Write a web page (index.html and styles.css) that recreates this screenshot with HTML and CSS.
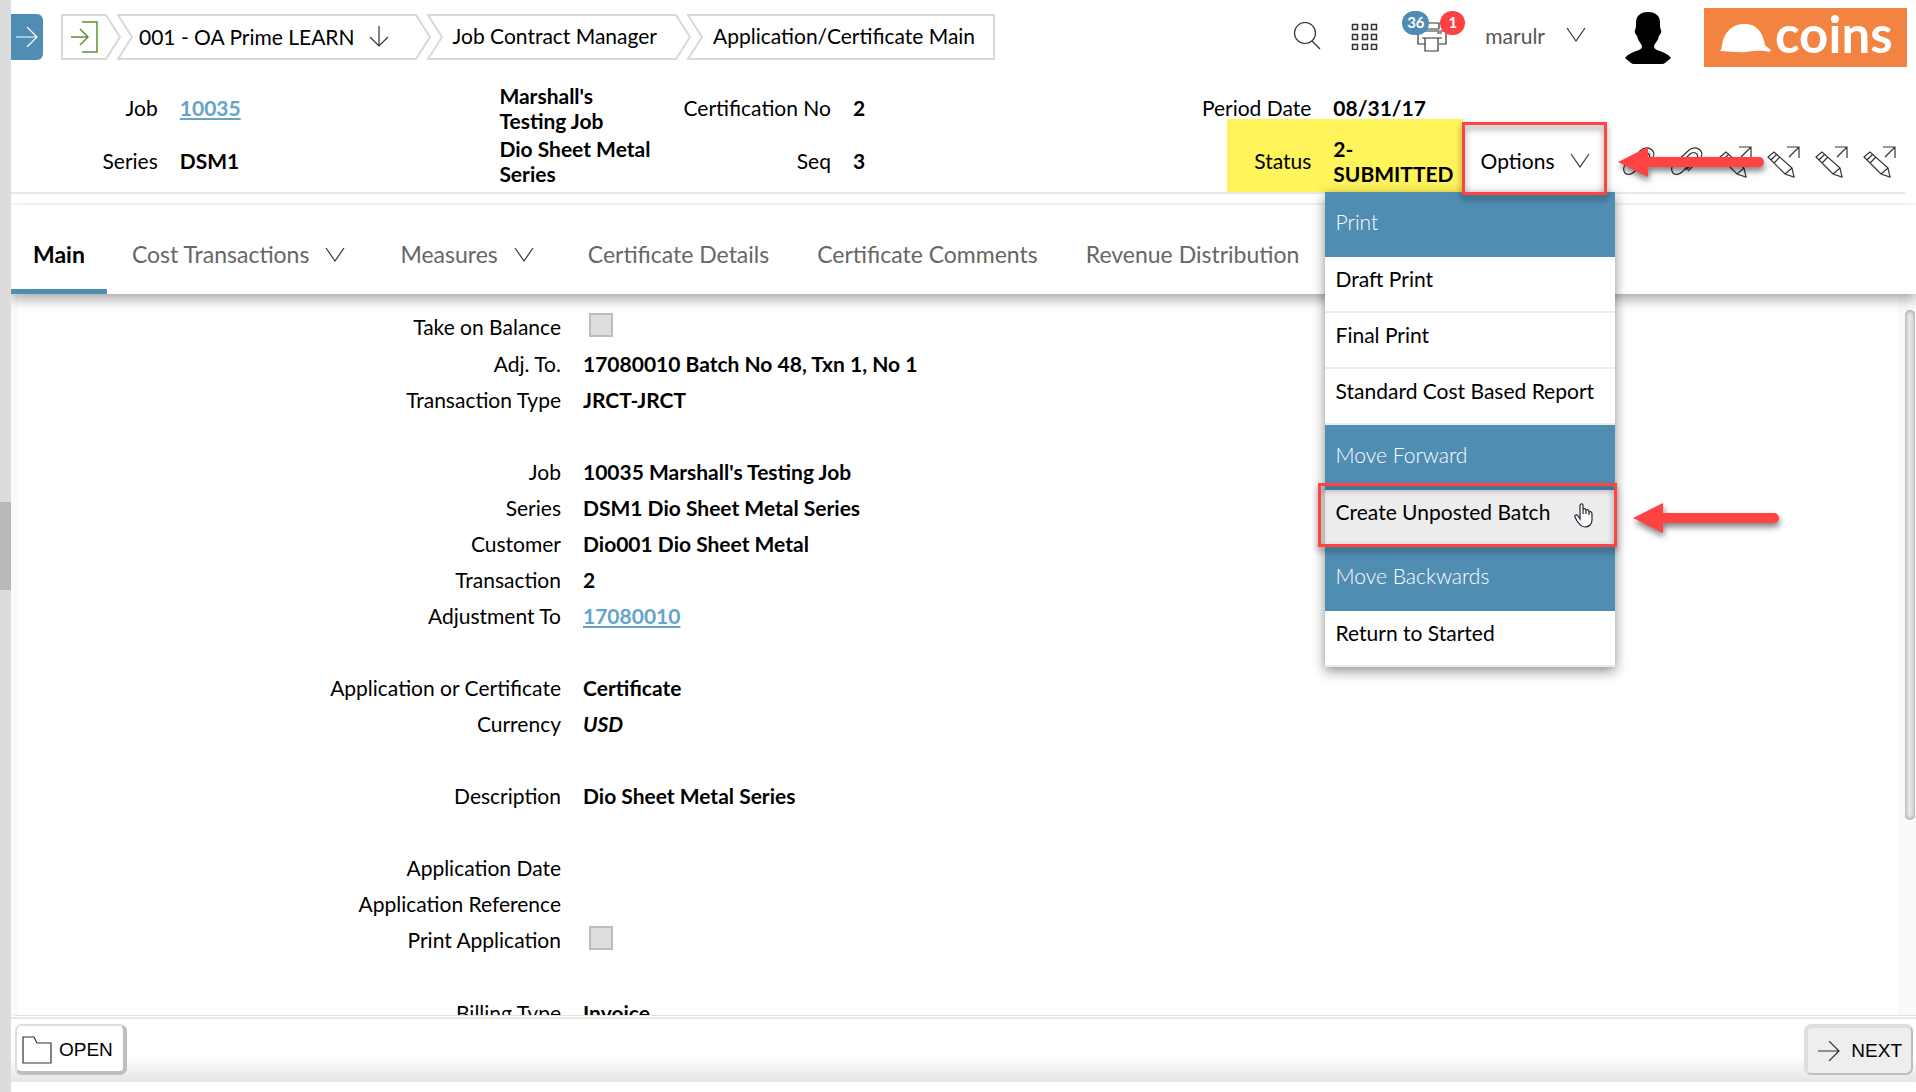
FILE: index.html
```html
<!DOCTYPE html>
<html lang="en">
<head>
<meta charset="utf-8">
<title>Application/Certificate Main</title>
<link rel="stylesheet" href="styles.css">
</head>
<body>
<svg class="defs" aria-hidden="true">
  <symbol id="notch" viewBox="0 0 16 46"><path d="M16 1H1L15 23L1 45H16"/></symbol>
  <symbol id="point" viewBox="0 0 16 46"><path d="M0 1H1L15 23L1 45H0"/></symbol>
  <symbol id="chevron" viewBox="0 0 20 16"><path d="M1 1L10 14L19 1"/></symbol>
  <symbol id="clip" viewBox="0 0 34 34"><path d="M20 18L11 27C8 30 4 30 2 28C0 25 0 22 3 19L17 6C21 2 26 2 29 5C32 8 31 12 28 15L17 26M8 20L19 9C21 7 24 7 26 9C27 11 27 13 25 15L15 25"/></symbol>
  <symbol id="pencil" viewBox="0 0 34 34"><path d="M1 12L7 7L25 23L27 32L18 29ZM4 15L10 9M7 18L13 12M18 29L25 23M20 2H32V13M32 2L22 12"/></symbol>
  <symbol id="pointer-arrow" viewBox="0 0 146 34"><path d="M0 17L30 2V12H141A5 5 0 0 1 141 22H30V32Z"/></symbol>
</svg>
<div class="app">
  <div class="splitter"><span class="splitter-handle"></span></div>
  <div class="page">
    <header class="topbar">
      <button class="expand" aria-label="Expand menu"><svg width="22" height="20" viewBox="0 0 22 20"><path d="M0 10H21M11 0L21 10L11 20"/></svg></button>
      <nav class="crumbs" aria-label="Breadcrumb">
        <a class="crumb first" href="#" aria-label="Exit"><span class="crumb-body exit"><svg width="28" height="32" viewBox="0 0 28 32"><path d="M11 1H26V31H11M0 16H17M9 8L17 16L9 24"/></svg></span><svg class="edge"><use href="#point"/></svg></a>
        <a class="crumb" href="#"><svg class="edge"><use href="#notch"/></svg><span class="crumb-body company">001 - OA Prime LEARN<svg width="20" height="21" viewBox="0 0 20 21"><path d="M10 0V20M1 11L10 20L19 11"/></svg></span><svg class="edge"><use href="#point"/></svg></a>
        <a class="crumb" href="#"><svg class="edge"><use href="#notch"/></svg><span class="crumb-body">Job Contract Manager</span><svg class="edge"><use href="#point"/></svg></a>
        <a class="crumb last" href="#"><svg class="edge"><use href="#notch"/></svg><span class="crumb-body">Application/Certificate Main</span></a>
      </nav>
      <div class="tools">
        <button class="tool" aria-label="Search"><svg width="28" height="28" viewBox="0 0 28 28"><circle cx="12" cy="11" r="10.5"/><path d="M19 19L27 27"/></svg></button>
        <button class="tool" aria-label="Applications"><svg class="apps" width="28" height="28" viewBox="0 0 28 28"><path d="M1.500 2.500h5v5h-5zM11.500 2.500h5v5h-5zM20.500 2.500h5v5h-5zM1.500 12.500h5v5h-5zM11.500 12.500h5v5h-5zM20.500 12.500h5v5h-5zM1.500 22.500h5v5h-5zM11.500 22.500h5v5h-5zM20.500 22.500h5v5h-5z"/></svg></button>
        <button class="tool printer" aria-label="Print queue"><svg width="30" height="30" viewBox="0 0 30 30"><path d="M8 7V1H22V7M8 22H1V11Q1 9 3 9H27Q29 9 29 11V22H22M20 11H25M5 16H25M8 16V29H21V16M8 7H22"/></svg><span class="badge blue">36</span><span class="badge red">1</span></button>
        <button class="user">marulr<svg class="chev"><use href="#chevron"/></svg></button>
        <svg class="avatar" width="46" height="52" viewBox="0 0 46 52"><path d="M23 0C31 0 35 4 35 11C35 14 35 16 36 18C37 21 35 22 34 24C33 29 30 31 29 34C29 36 30 37 32 38C38 40 43 42 46 46L40 51Q39 52 37 52H9Q7 52 6 51L0 46C3 42 8 40 14 38C16 37 17 36 17 34C16 31 13 29 12 24C11 22 9 21 10 18C11 16 11 14 11 11C11 4 15 0 23 0Z"/></svg>
        <div class="logo"><svg width="51" height="30" viewBox="0 0 51 30"><path d="M0 28Q2 26 2 22C4 9 12 1 24 1C36 0 43 9 45 22Q48 25 51 27L49 29C40 27 33 28 26 29C17 30 9 28 0 28Z"/></svg><span>coins</span></div>
      </div>
    </header>

    <section class="context">
      <span class="label">Job</span><a class="value" href="#">10035</a><span class="value">Marshall's Testing Job</span>
      <span class="label">Certification No</span><span class="value">2</span>
      <span class="label">Period Date</span><span class="value">08/31/17</span><span></span>
      <span class="label">Series</span><span class="value">DSM1</span><span class="value">Dio Sheet Metal Series</span>
      <span class="label">Seq</span><span class="value">3</span>
      <span class="label">Status</span><span class="value status">2-<br>SUBMITTED</span>
      <div class="actions">
        <div class="options">
          <button class="options-button">Options<svg class="chev"><use href="#chevron"/></svg></button>
          <div class="menu">
            <h2>Print</h2>
            <a href="#">Draft Print</a>
            <a href="#">Final Print</a>
            <a href="#">Standard Cost Based Report</a>
            <h2>Move Forward</h2>
            <a class="hover" href="#">Create Unposted Batch
              <svg class="hand" width="20" height="26" viewBox="0 0 20 26"><path d="M6 14V3C6 0 9 0 9 3V11V7C9 5 12 5 12 8V11V8C12 6 15 6 15 9V12V10C15 8 18 8 18 11V17C18 21 15 24 11 24C7 24 5 21 3 18L1 14C0 12 3 11 4 13L6 16Z"/></svg>
              <svg class="arrow arrow-item"><use href="#pointer-arrow"/></svg>
            </a>
            <h2>Move Backwards</h2>
            <a href="#">Return to Started</a>
          </div>
        </div>
        <div class="links">
          <button aria-label="Attachments"><svg><use href="#clip"/></svg></button>
          <button aria-label="Add attachment"><svg><use href="#clip"/></svg></button>
          <button aria-label="Note 1"><svg><use href="#pencil"/></svg></button>
          <button aria-label="Note 2"><svg><use href="#pencil"/></svg></button>
          <button aria-label="Note 3"><svg><use href="#pencil"/></svg></button>
          <button aria-label="Note 4"><svg><use href="#pencil"/></svg></button>
          <svg class="arrow arrow-options"><use href="#pointer-arrow"/></svg>
        </div>
      </div>
    </section>

    <nav class="tabs">
      <a class="tab active" href="#">Main</a>
      <a class="tab more" href="#">Cost Transactions<svg class="chev"><use href="#chevron"/></svg></a>
      <a class="tab more" href="#">Measures<svg class="chev"><use href="#chevron"/></svg></a>
      <a class="tab" href="#">Certificate Details</a>
      <a class="tab" href="#">Certificate Comments</a>
      <a class="tab" href="#">Revenue Distribution</a>
    </nav>

    <main class="content">
      <div class="form">
        <div class="group">
          <label class="label" for="balance">Take on Balance</label><input type="checkbox" id="balance" disabled>
          <span class="label">Adj. To.</span><span class="value">17080010 Batch No 48, Txn 1, No 1</span>
          <span class="label">Transaction Type</span><span class="value">JRCT-JRCT</span>
        </div>
        <div class="group">
          <span class="label">Job</span><span class="value">10035 Marshall's Testing Job</span>
          <span class="label">Series</span><span class="value">DSM1 Dio Sheet Metal Series</span>
          <span class="label">Customer</span><span class="value">Dio001 Dio Sheet Metal</span>
          <span class="label">Transaction</span><span class="value">2</span>
          <span class="label">Adjustment To</span><a class="value" href="#">17080010</a>
        </div>
        <div class="group">
          <span class="label">Application or Certificate</span><span class="value">Certificate</span>
          <span class="label">Currency</span><em class="value">USD</em>
        </div>
        <div class="group">
          <span class="label">Description</span><span class="value">Dio Sheet Metal Series</span>
        </div>
        <div class="group">
          <span class="label">Application Date</span><span class="value"></span>
          <span class="label">Application Reference</span><span class="value"></span>
          <label class="label" for="print-app">Print Application</label><input type="checkbox" id="print-app" disabled>
        </div>
        <div class="group">
          <span class="label">Billing Type</span><span class="value">Invoice</span>
        </div>
      </div>
      <div class="track"><span class="thumb"></span></div>
    </main>

    <footer class="footer">
      <button class="open"><svg width="30" height="28" viewBox="0 0 30 28"><path d="M1 27V1H12L15 7H29V27Z"/></svg>OPEN</button>
      <button class="next"><svg width="22" height="20" viewBox="0 0 22 20"><path d="M0 10H21M11 0L21 10L11 20"/></svg>NEXT</button>
    </footer>
  </div>
</div>
</body>
</html>
```
FILE: styles.css
```css
* { box-sizing: border-box; }
html, body { height: 100%; }
body {
  margin: 0;
  background: #fff;
  color: #000;
  font: 400 21px/25px Lato, "Open Sans", sans-serif;
  overflow: hidden;
}
button { border: 0; padding: 0; background: none; font: inherit; color: inherit; }
a { color: inherit; text-decoration: none; }
svg { fill: none; stroke: #333; stroke-width: 1.2; flex: none; }
.defs { position: absolute; width: 0; height: 0; }

.app { display: flex; height: 100vh; }
.splitter {
  width: 11px;
  flex: none;
  display: flex;
  align-items: center;
  background: #dcdcdc;
}
.splitter-handle { width: 11px; height: 88px; background: #b9b9b9; }
.page { flex: 1; min-width: 0; display: flex; flex-direction: column; padding-bottom: 10px; }

/* top bar */
.topbar { display: flex; height: 81px; flex: none; padding-right: 9px; }
.expand {
  display: flex;
  align-items: center;
  justify-content: center;
  width: 32px;
  height: 46px;
  margin: 14px 18px 0 0;
  border-radius: 0 6px 6px 0;
  background: #4f8db3;
}
.expand svg { stroke: #fff; }
.crumbs { display: flex; margin-top: 14px; }
.crumb { display: flex; height: 46px; margin-right: -4px; white-space: nowrap; }
.crumb .edge { width: 16px; height: 46px; stroke: #d8d8d8; stroke-width: 2; }
.crumb-body {
  display: flex;
  align-items: center;
  padding: 0 18px 3px 10px;
  border: solid #d8d8d8;
  border-width: 2px 0;
}
.company { gap: 14px; padding: 0 26px 1px 6px; }
.exit { padding: 0 6px 0 8px; border-left-width: 2px; }
.exit svg { stroke: #5c9132; stroke-width: 1.5; }
.last .crumb-body { border-right-width: 2px; }
.tools { display: flex; margin-left: auto; }
.tool { display: flex; height: 28px; margin: 22px 30px 0 0; position: relative; }
.printer { margin: 22px 38px 0 8px; }
.apps { stroke-width: 1.5; }
.badge {
  position: absolute;
  top: -11px;
  height: 24px;
  border-radius: 12px;
  font: 700 15px/22px Lato, sans-serif;
  color: #fff;
  text-align: center;
}
.blue { left: -15px; width: 27px; background: #4f8db3; }
.red { left: 23px; width: 25px; background: #ff4040; }
.user { display: flex; align-items: center; gap: 21px; height: 28px; margin-top: 21px; color: #555; }
.chev { width: 20px; height: 16px; }
.avatar { margin: 12px 33px 0 39px; fill: #000; stroke: none; }
.logo {
  display: flex;
  align-items: center;
  gap: 4px;
  width: 203px;
  height: 59px;
  margin-top: 8px;
  padding-left: 16px;
  background: #f28340;
  color: #fff;
  font: 700 51px/50px Lato, sans-serif;
}
.logo svg { fill: #fff; stroke: none; }
.logo span { padding-bottom: 8px; }

/* record summary */
.context {
  display: grid;
  grid-template-columns: 147fr 298fr 160fr 150fr 158fr 279fr 120fr 430fr;
  column-gap: 22px;
  grid-auto-rows: 53px;
  align-items: center;
  margin: 0 11px 0 0;
  padding-bottom: 5px;
  border-bottom: 2px solid #e8e8e8;
  position: relative;
  z-index: 2;
}
.label { text-align: right; white-space: nowrap; }
.value { font-weight: 700; }
a.value { color: #67a2c9; text-decoration: underline; justify-self: start; }
.status { position: relative; }
.status::before {
  content: "";
  position: absolute;
  z-index: -1;
  inset: -17px -9px -6px -106px;
  background: #fff45a;
}
.actions { display: flex; justify-content: space-between; align-items: center; }
.options { position: relative; }
.options-button { display: flex; align-items: center; gap: 16px; height: 53px; padding: 0 5px; }
.options::after, .hover::before {
  content: "";
  position: absolute;
  border: 3px solid #ff4343;
  filter: drop-shadow(0 4px 3px rgba(0, 0, 0, .45));
  pointer-events: none;
}
.options::after { inset: -12px -12px -8px -14px; z-index: 2; }
.menu {
  position: absolute;
  top: 58px;
  left: -151px;
  width: 290px;
  background: #fff;
  box-shadow: 0 4px 12px rgba(0, 0, 0, .45);
}
.menu h2 {
  height: 65px;
  margin: 0;
  padding: 17px 11px;
  background: #4f8db3;
  color: #fff;
  font: 300 21px/26px Lato, sans-serif;
}
.menu a { display: block; height: 56px; padding: 9px 11px; line-height: 26px; border-bottom: 2px solid #ececec; white-space: nowrap; position: relative; }
.menu .hover { background: #ededed; z-index: 1; }
.hover::before { inset: -7px -2px -3px -7px; }
.hand { position: absolute; right: 21px; top: 13px; fill: #fff; stroke: #223; }
.arrow {
  position: absolute;
  width: 146px;
  height: 34px;
  fill: #ff4343;
  stroke: none;
  filter: drop-shadow(1px 4px 3px rgba(0, 0, 0, .5));
}
.arrow-item { left: 308px; top: 11px; }
.arrow-options { left: -5px; top: 0; }
.links { display: flex; gap: 14px; margin: 2px 8px 0 0; position: relative; }
.links button, .links button svg { display: block; width: 34px; height: 34px; }

/* tabs */
.tabs {
  display: flex;
  height: 89px;
  flex: none;
  margin-top: 11px;
  background: #fff;
  color: #666;
  font-size: 23px;
  box-shadow: 0 5px 12px rgba(0, 0, 0, .35);
  clip-path: inset(-2px 0 -24px);
  position: relative;
  z-index: 1;
}
.tab { display: flex; align-items: center; padding: 10px 24px 0; white-space: nowrap; }
.more { gap: 16px; padding: 10px 30px 0 25px; }
.active { padding: 10px 22px 0; color: #000; font-weight: 700; box-shadow: inset 0 -5px #4f8db3; }

/* form */
.content { display: flex; flex: 1; min-height: 0; border-left: 7px solid #fafafa; border-bottom: 1px solid #e0e0e0; }
.form { flex: 1; overflow: hidden; padding-top: 14px; }
.group {
  display: grid;
  grid-template-columns: 543fr 1315fr;
  column-gap: 22px;
  grid-auto-rows: minmax(36px, auto);
  align-items: center;
  margin-bottom: 36px;
}
.form input {
  appearance: none;
  width: 24px;
  height: 24px;
  margin: 5px 0 8px 6px;
  border: 2px solid #bdbdbd;
  background: #dedede;
}
.track { width: 18px; padding: 16px 1px 0 7px; background: #fafafa; }
.thumb {
  display: block;
  height: 510px;
  border-radius: 5px;
  background: #e6e6e6;
  box-shadow: inset 0 0 4px #888;
}

/* footer */
.footer {
  display: flex;
  justify-content: space-between;
  align-items: flex-start;
  height: 65px;
  flex: none;
  margin-top: 1px;
  padding: 5px 3px 0 4px;
  border-top: 2px solid #e8e8e8;
  background: linear-gradient(#fff 60%, #e4e4e4);
  font: 19px/24px "Liberation Sans", Arial, sans-serif;
}
.footer button { display: flex; align-items: center; height: 51px; border: solid; border-radius: 7px; }
.footer .open { gap: 7px; padding: 2px 10px 0 5px; border-width: 2px 4px 4px 2px; border-color: #dedede #bebebe #bebebe #dedede; background: #fff; }
.footer .next { gap: 11px; padding: 0 9px 0 10px; border-width: 4px 2px 2px 4px; border-color: #dedede #bebebe #bebebe #dedede; background: #eee; }
```
